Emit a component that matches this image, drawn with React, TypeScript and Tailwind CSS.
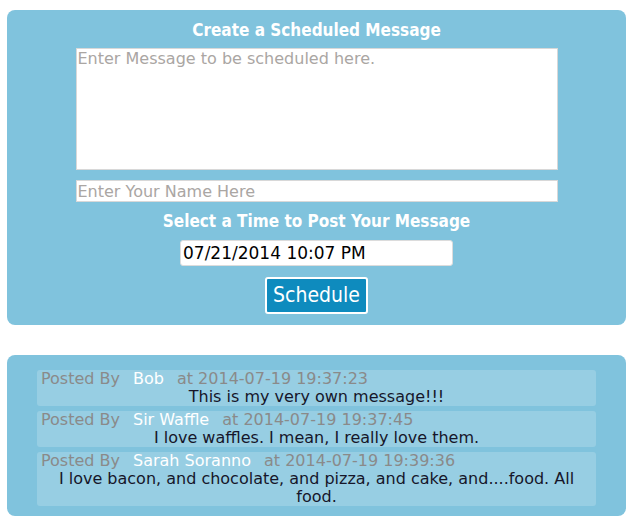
const messages = [
  { name: "Bob", at: "2014-07-19 19:37:23", text: "This is my very own message!!!" },
  { name: "Sir Waffle", at: "2014-07-19 19:37:45", text: "I love waffles. I mean, I really love them." },
  {
    name: "Sarah Soranno",
    at: "2014-07-19 19:39:36",
    text: "I love bacon, and chocolate, and pizza, and cake, and....food. All food.",
  },
];

export default function App() {
  return (
    <div className="min-h-[526px] bg-white px-[7px] pt-[10px] font-['DejaVu_Sans',sans-serif]">
      {/* scheduler form */}
      <div className="flex flex-col items-center rounded-[8px] bg-[#80c3dd] pt-[9px] pb-[11px]">
        <h2 className="mb-[7px] font-['DejaVu_Sans_Condensed','DejaVu_Sans',sans-serif] text-[17px] font-bold leading-[22px] text-white">
          Create a Scheduled Message
        </h2>
        <textarea
          placeholder="Enter Message to be scheduled here."
          className="h-[122px] w-[482px] resize-none border border-[#d8d8d8] bg-white px-[1px] py-0 text-[16px] leading-[20px] text-black outline-none placeholder:text-[#aaa6a3]"
        />
        <input
          placeholder="Enter Your Name Here"
          className="mt-[10px] h-[22px] w-[482px] border border-[#d8d8d8] bg-white px-[1px] text-[16px] leading-[20px] text-black outline-none placeholder:text-[#aaa6a3]"
        />
        <h3 className="mt-[8px] mb-[8px] font-['DejaVu_Sans_Condensed','DejaVu_Sans',sans-serif] text-[17px] font-bold leading-[22px] text-white">
          Select a Time to Post Your Message
        </h3>
        <input
          readOnly
          value="07/21/2014 10:07 PM"
          className="h-[26px] w-[273px] rounded-[3px] border border-[#dcdcdc] bg-white px-[2px] text-[17px] text-black outline-none"
        />
        <button className="mt-[11px] h-[37px] w-[103px] rounded-[3px] border-2 border-white bg-[#0e8bbe] font-['DejaVu_Sans_Condensed','DejaVu_Sans',sans-serif] text-[21px] text-white">
          Schedule
        </button>
      </div>

      {/* posted messages */}
      <div className="mt-[30px] flex flex-col gap-[5px] rounded-[8px] bg-[#80c3dd] px-[30px] pt-[15px] pb-[10px]">
        {messages.map((m) => (
          <div key={m.at} className="rounded-[3px] bg-[#97cee3] px-[4px] text-[16px] leading-[18px]">
            <div className="text-[#8a8a8a]">
              Posted By<span className="mx-[13px] text-white">{m.name}</span>at {m.at}
            </div>
            <p className="text-center text-[#16162a]">{m.text}</p>
          </div>
        ))}
      </div>
    </div>
  );
}
